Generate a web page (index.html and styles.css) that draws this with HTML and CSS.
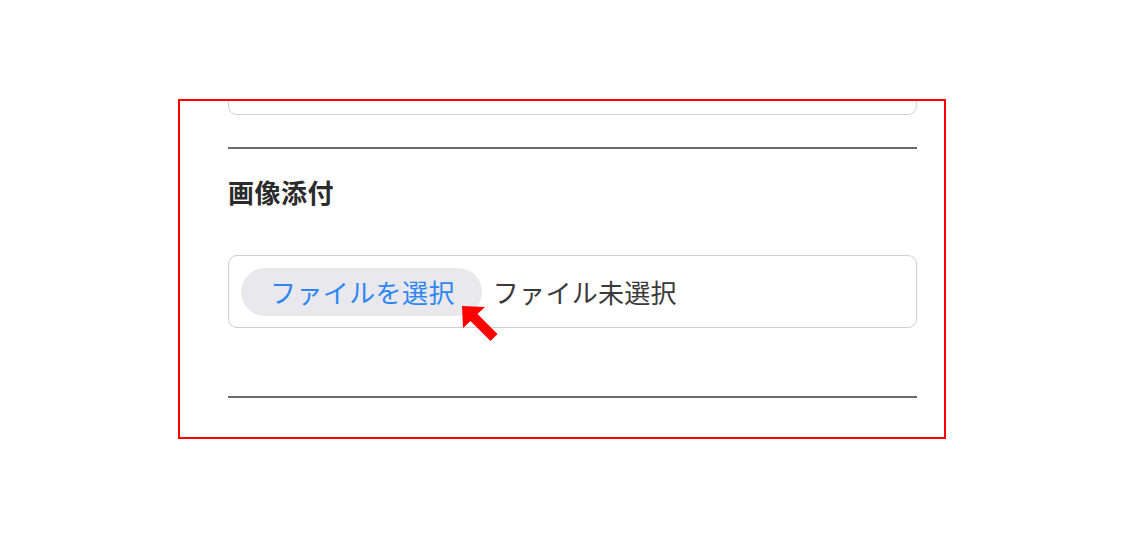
FILE: index.html
```html
<!DOCTYPE html>
<html lang="ja">
<head>
<meta charset="utf-8">
<link rel="stylesheet" href="styles.css">
</head>
<body>
<div class="frame">
  <div class="content">
    <div class="prev-box"></div>
    <hr class="divider">
    <h2 class="label">画像添付</h2>
    <div class="file-field">
      <span class="file-btn">ファイルを選択</span>
      <span class="file-status">ファイル未選択</span>
    </div>
    <hr class="divider divider-bottom">
  </div>
  <svg class="arrow" width="50" height="50" viewBox="0 0 50 50">
    <polygon fill="#ff0000" points="2,2 25,3 17.5,10 37.5,30 30.5,37 10.5,17 3,24"/>
  </svg>
</div>
</body>
</html>
```
FILE: styles.css
```css
html, body {
  margin: 0;
  padding: 0;
  background: #ffffff;
}
body {
  width: 1125px;
  height: 540px;
  font-family: "Noto Sans CJK JP", "Noto Sans", sans-serif;
}
.frame {
  position: relative;
  margin-left: 178px;
  margin-top: 99px;
  width: 768px;
  height: 340px;
  box-sizing: border-box;
  border: 2px solid #ff0000;
  overflow: hidden;
}
.content {
  padding: 0 27px 0 48px;
}
.prev-box {
  margin-top: -26px;
  height: 40px;
  border: 1.5px solid #d0d0d0;
  border-radius: 9px;
  box-sizing: border-box;
}
.divider {
  margin: 32px 0 0;
  height: 2px;
  border: none;
  background: #6a6a6a;
}
.label {
  margin: 25px 0 0;
  font-size: 26px;
  line-height: 36px;
  font-weight: 700;
  letter-spacing: 0.5px;
  color: #2b2b2b;
}
.file-field {
  margin-top: 45px;
  display: flex;
  align-items: center;
  gap: 11px;
  height: 73px;
  box-sizing: border-box;
  padding: 0 12px;
  border: 1.5px solid #cfcfcf;
  border-radius: 9px;
}
.file-btn {
  display: flex;
  align-items: center;
  height: 48px;
  padding: 0 27px 0 29px;
  border-radius: 24px;
  background: #e9e9ed;
  color: #2f86f2;
  font-size: 26px;
  letter-spacing: 0.4px;
}
.file-status {
  font-size: 26px;
  letter-spacing: 0.3px;
  color: #3a3a3a;
}
.divider-bottom {
  margin-top: 68px;
}
.arrow {
  position: absolute;
  left: 280px;
  top: 203px;
}
```
